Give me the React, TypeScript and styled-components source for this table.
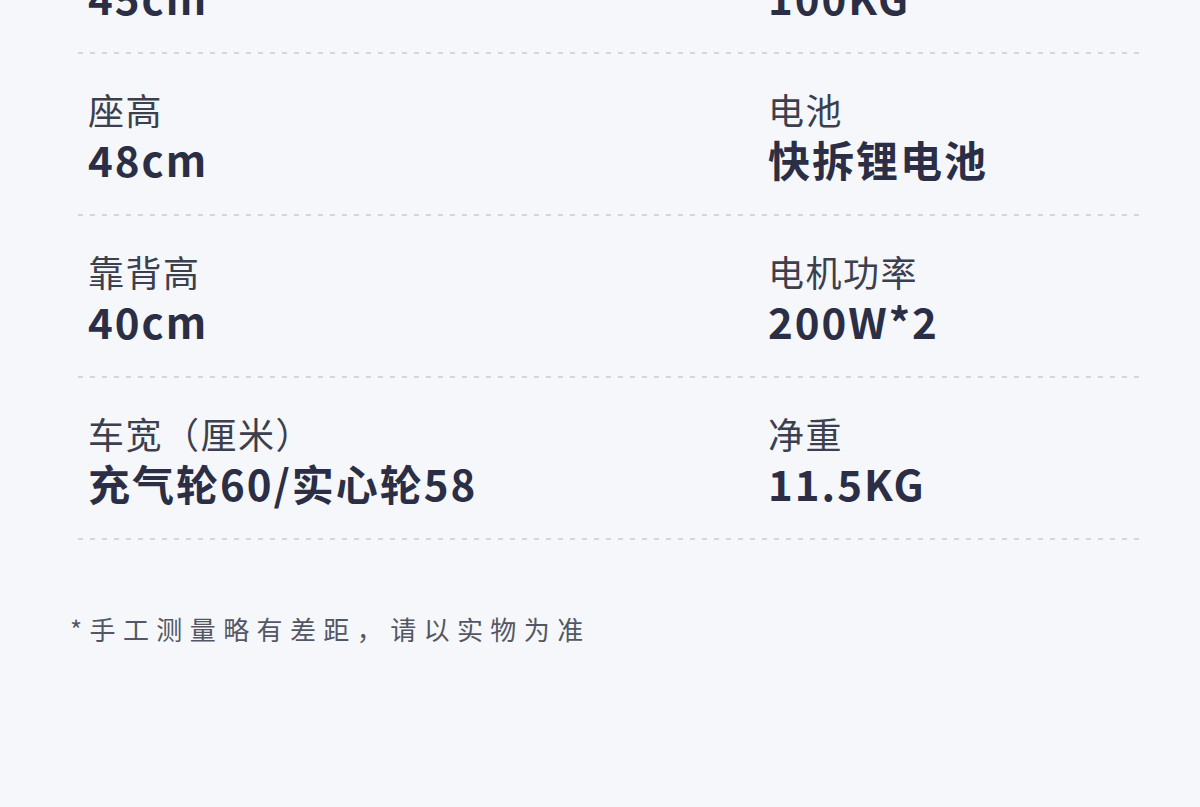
import React from 'react'
import styled, { createGlobalStyle } from 'styled-components'

const GlobalStyle = createGlobalStyle`
  html, body {
    margin: 0;
    padding: 0;
    background: #f5f7fb;
    overflow: hidden;
  }
  body {
    font-family: "Noto Sans CJK SC", "Noto Sans", sans-serif;
  }
`

const Page = styled.div`
  width: 1200px;
  height: 807px;
  overflow: hidden;
  background: #f5f7fb;
`

const SpecTable = styled.div`
  margin: -108px 60px 0 78px;
  display: flex;
  flex-direction: column;
`

const SpecRow = styled.div`
  display: grid;
  grid-template-columns: 690px 1fr;
  padding: 31px 0;
  background-image: repeating-linear-gradient(
    to right,
    #d3d6de 0,
    #d3d6de 5px,
    transparent 5px,
    transparent 12px
  );
  background-size: 100% 2px;
  background-position: left bottom;
  background-repeat: no-repeat;
`

const Cell = styled.div<{ $first?: boolean }>`
  display: flex;
  flex-direction: column;
  padding-left: ${({ $first }) => ($first ? '10px' : '0')};
`

const Label = styled.div`
  font-size: 36px;
  line-height: 48px;
  font-weight: 400;
  letter-spacing: 1.5px;
  color: #3c3f4d;
  white-space: nowrap;
`

const Value = styled.div`
  font-size: 42px;
  line-height: 52px;
  font-weight: 700;
  letter-spacing: 2px;
  color: #2b2e44;
  white-space: nowrap;
`

const Note = styled.p`
  margin: 71px 0 0 70px;
  font-size: 26px;
  line-height: 36px;
  letter-spacing: 7.4px;
  color: #545763;
`

const specs = [
  [
    { label: '座宽', value: '45cm' },
    { label: '承重', value: '100KG' },
  ],
  [
    { label: '座高', value: '48cm' },
    { label: '电池', value: '快拆锂电池' },
  ],
  [
    { label: '靠背高', value: '40cm' },
    { label: '电机功率', value: '200W*2' },
  ],
  [
    { label: '车宽（厘米）', value: '充气轮60/实心轮58' },
    { label: '净重', value: '11.5KG' },
  ],
]

const App = () => {
  return (
    <Page>
      <GlobalStyle />
      <SpecTable>
        {specs.map((row, i) => (
          <SpecRow key={i}>
            {row.map((item, j) => (
              <Cell key={item.label} $first={j === 0}>
                <Label>{item.label}</Label>
                <Value>{item.value}</Value>
              </Cell>
            ))}
          </SpecRow>
        ))}
      </SpecTable>
      <Note>*手工测量略有差距，请以实物为准</Note>
    </Page>
  )
}

export default App
